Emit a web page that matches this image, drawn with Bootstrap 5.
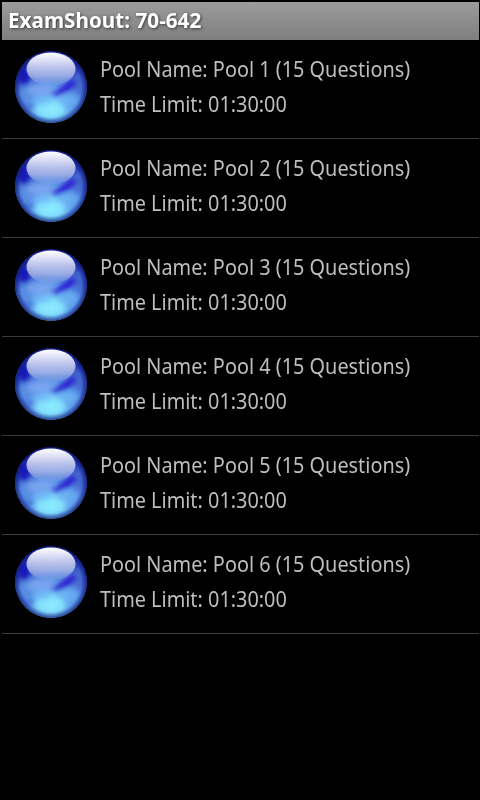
<!DOCTYPE html>
<html lang="en">

<head>
  <meta charset="UTF-8">
  <meta name="viewport" content="width=device-width, initial-scale=1.0">
  <title>ExamShout</title>
  <link href="https://cdn.jsdelivr.net/npm/bootstrap@5.3.0/dist/css/bootstrap.min.css" rel="stylesheet">
  <style>
    body {
      background: #000;
      font-family: "Noto Sans", "Open Sans", sans-serif;
    }

    .screen {
      width: 479px;
      height: 800px;
      padding: 2px 0 0 2px;
    }

    .title-bar {
      height: 38px;
      padding: 0 6px;
      background: linear-gradient(#9c9c9c, #7e7e7e);
    }

    .title-text {
      color: #fff;
      font-size: 21px;
      font-weight: 700;
      line-height: 36px;
      text-shadow: 1px 1px 3px rgba(0, 0, 0, .6);
      transform: scaleX(.985);
      transform-origin: left;
    }

    .pool-item {
      height: 99px;
      padding: 0 0 4px 11px;
      background: transparent;
      border: 0;
      border-bottom: 1px solid #3b3b3b !important;
      border-radius: 0 !important;
    }

    .pool-text {
      margin-left: 11px;
      padding-bottom: 2px;
      color: #bebebe;
      font-size: 22px;
      line-height: 35px;
      white-space: nowrap;
      transform: scaleX(.903);
      transform-origin: left;
    }
  </style>
</head>

<body>
  <!-- Shared orb artwork -->
  <svg width="0" height="0" class="position-absolute" aria-hidden="true">
    <defs>
      <radialGradient id="orbBase" cx="50%" cy="80%" r="86%">
        <stop offset="0" stop-color="#84e4fc" />
        <stop offset=".25" stop-color="#68b0f2" />
        <stop offset=".52" stop-color="#4a78dc" />
        <stop offset=".8" stop-color="#2536b4" />
        <stop offset="1" stop-color="#10189a" />
      </radialGradient>
      <radialGradient id="orbEdge">
        <stop offset=".84" stop-color="#0a1470" stop-opacity="0" />
        <stop offset="1" stop-color="#0a1470" stop-opacity=".7" />
      </radialGradient>
      <linearGradient id="orbGloss" x1="0" y1="0" x2="0" y2="1">
        <stop offset="0" stop-color="#fff" />
        <stop offset=".3" stop-color="#dcdff6" stop-opacity=".95" />
        <stop offset=".7" stop-color="#b0bce8" stop-opacity=".8" />
        <stop offset="1" stop-color="#86a4e6" stop-opacity=".25" />
      </linearGradient>
      <filter id="soft" x="-50%" y="-50%" width="200%" height="200%">
        <feGaussianBlur stdDeviation="2.6" />
      </filter>
      <clipPath id="orbClip">
        <circle cx="38" cy="38" r="36" />
      </clipPath>
    </defs>
    <symbol id="orb" viewBox="0 0 76 76">
      <circle cx="38" cy="38" r="36" fill="url(#orbBase)" />
      <g clip-path="url(#orbClip)">
        <g filter="url(#soft)">
          <ellipse cx="11" cy="27" rx="6" ry="9" fill="#1616b8" />
          <ellipse cx="12" cy="45" rx="9" ry="7" fill="#5a90e4" opacity=".8" />
          <ellipse cx="28" cy="41" rx="14" ry="6" fill="#7ca4ee" opacity=".9" />
          <ellipse cx="37" cy="61" rx="15" ry="8" fill="#8cecff" opacity=".75" />
          <ellipse cx="30" cy="52" rx="9" ry="4" fill="#70b8f6" opacity=".6" />
          <ellipse cx="16" cy="58" rx="6" ry="3" fill="#3c60d0" opacity=".7" />
          <ellipse cx="56" cy="51" rx="10" ry="6" fill="#6cb4f2" opacity=".7" />
          <ellipse cx="65" cy="34" rx="5" ry="10" fill="#4a6cd0" opacity=".8" />
          <path d="M37 44 L46 40 L60 30 L65 34 L54 43 L43 47 Z" fill="#2a18d0" />
        </g>
        <circle cx="38" cy="38" r="36" fill="url(#orbEdge)" />
      </g>
      <ellipse cx="38" cy="20" rx="24.5" ry="16.5" fill="url(#orbGloss)" />
    </symbol>
  </svg>

  <div class="screen">
    <header class="title-bar">
      <div class="title-text">ExamShout: 70-642</div>
    </header>

    <!-- Question pools -->
    <div class="list-group list-group-flush">
      <div class="pool-item list-group-item d-flex align-items-center">
        <svg class="flex-shrink-0" width="76" height="76"><use href="#orb" /></svg>
        <div class="pool-text">
          <div>Pool Name: Pool 1 (15 Questions)</div>
          <div>Time Limit: 01:30:00</div>
        </div>
      </div>
      <div class="pool-item list-group-item d-flex align-items-center">
        <svg class="flex-shrink-0" width="76" height="76"><use href="#orb" /></svg>
        <div class="pool-text">
          <div>Pool Name: Pool 2 (15 Questions)</div>
          <div>Time Limit: 01:30:00</div>
        </div>
      </div>
      <div class="pool-item list-group-item d-flex align-items-center">
        <svg class="flex-shrink-0" width="76" height="76"><use href="#orb" /></svg>
        <div class="pool-text">
          <div>Pool Name: Pool 3 (15 Questions)</div>
          <div>Time Limit: 01:30:00</div>
        </div>
      </div>
      <div class="pool-item list-group-item d-flex align-items-center">
        <svg class="flex-shrink-0" width="76" height="76"><use href="#orb" /></svg>
        <div class="pool-text">
          <div>Pool Name: Pool 4 (15 Questions)</div>
          <div>Time Limit: 01:30:00</div>
        </div>
      </div>
      <div class="pool-item list-group-item d-flex align-items-center">
        <svg class="flex-shrink-0" width="76" height="76"><use href="#orb" /></svg>
        <div class="pool-text">
          <div>Pool Name: Pool 5 (15 Questions)</div>
          <div>Time Limit: 01:30:00</div>
        </div>
      </div>
      <div class="pool-item list-group-item d-flex align-items-center">
        <svg class="flex-shrink-0" width="76" height="76"><use href="#orb" /></svg>
        <div class="pool-text">
          <div>Pool Name: Pool 6 (15 Questions)</div>
          <div>Time Limit: 01:30:00</div>
        </div>
      </div>
    </div>
  </div>

  <script src="https://cdn.jsdelivr.net/npm/bootstrap@5.3.0/dist/js/bootstrap.bundle.min.js"></script>
</body>

</html>
